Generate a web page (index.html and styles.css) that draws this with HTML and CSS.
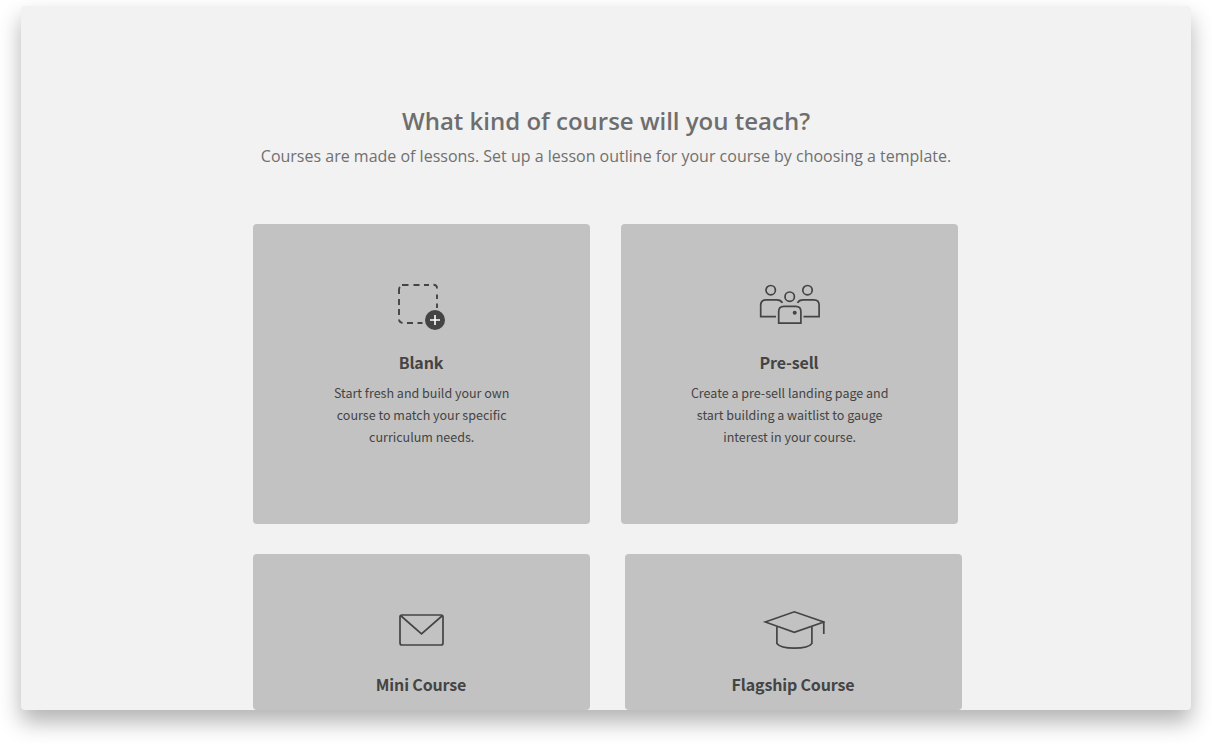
FILE: index.html
```html
<!DOCTYPE html>
<html lang="en">
<head>
<meta charset="utf-8">
<title>Choose a course template</title>
<link rel="stylesheet" href="styles.css">
</head>
<body>
<main class="panel">
  <h1 class="title"><span>What kind of course will you teach?</span></h1>
  <p class="subtitle"><span>Courses are made of lessons. Set up a lesson outline for your course by choosing a template.</span></p>
  <div class="row">
    <section class="card">
      <svg class="icon" width="62" height="50" viewBox="0 0 62 50" fill="none" stroke="#444" stroke-width="1.9">
        <path d="M11 5h6.5M22.5 5h6M33 5h5M42.5 4.8q3.5 0 3.5 3.700M46 14.500v4.500M46 23.500v4.500M8 14V9.500q0-1.500 1-2.500M8 19v6M8 29v6M8 39.500q.3 3 3.500 3.500M16 43h6M26.500 43h5"/>
        <circle cx="44" cy="40" r="10" fill="#444" stroke="none"/>
        <path d="M44 35v10M39 40h10" stroke="#fff" stroke-width="1.6"/>
      </svg>
      <h2 class="name"><span>Blank</span></h2>
      <p class="text"><span>Start fresh and build your own</span><br><span>course to match your specific</span><br><span>curriculum needs.</span></p>
    </section>
    <section class="card">
      <svg class="icon" width="62" height="50" viewBox="0 0 62 50" fill="none" stroke="#444" stroke-width="1.7">
        <circle cx="11.700" cy="10.200" r="4.700"/><circle cx="30.700" cy="16.700" r="4.700"/><circle cx="48.500" cy="10.200" r="4.700"/>
        <path d="M17 36.700H1.700V25q0-5.200 5.200-5.200h11q4 0 5.500 3M44.500 36.700h15.600V25q0-5.200-5.200-5.200H44q-4 0-5.500 3"/>
        <path d="M19.700 43.200V31.500q0-5.200 5.200-5.200h11.800q5.200 0 5.200 5.200v11.700z"/><circle cx="35.700" cy="32.800" r="2" fill="#444" stroke="none"/>
      </svg>
      <h2 class="name"><span>Pre-sell</span></h2>
      <p class="text"><span>Create a pre-sell landing page and</span><br><span>start building a waitlist to gauge</span><br><span>interest in your course.</span></p>
    </section>
  </div>
  <div class="row row-wide">
    <section class="card">
      <svg class="icon" width="62" height="50" viewBox="0 0 62 50" fill="none" stroke="#444" stroke-width="1.7">
        <rect x="9" y="5" width="43" height="30" rx="2"/><path d="M9.500 5.500l21 18.300L51.500 5.500"/>
      </svg>
      <h2 class="name"><span>Mini Course</span></h2>
    </section>
    <section class="card">
      <svg class="icon" width="62" height="50" viewBox="0 0 62 50" fill="none" stroke="#444" stroke-width="1.7">
        <path d="M2.200 12L31.300 1.800 60.800 12 31.300 22.300zM60.800 12v11.900M13.900 17v16.500q3.500 4.700 17.500 4.700t17.500-4.700V17"/>
      </svg>
      <h2 class="name"><span>Flagship Course</span></h2>
    </section>
  </div>
</main>
</body>
</html>
```

FILE: styles.css
```css
html { background: #fff; }
body { margin: 0; box-sizing: border-box; height: 746px; padding: 6px 0 0 21px; }
.panel {
  box-sizing: border-box; width: 1170px; height: 704px;
  padding-top: 96px; overflow: hidden; background: #f2f2f2; border-radius: 4px;
  box-shadow: 0 12px 22px rgba(0,0,0,.3); font-family: "Open Sans", sans-serif;
}
.title { margin: 0; font-size: 24px; line-height: 38px; font-weight: 600; color: #6e6e6e; text-align: center; }
.subtitle { margin: 3px 0 0; font-size: 16px; line-height: 26px; color: #707070; text-align: center; }
.row { display: flex; gap: 30.6px; margin: 55px 0 0 232px; }
.row-wide { gap: 34.6px; margin-top: 30px; }
.card { box-sizing: border-box; width: 337.4px; height: 300px; padding-top: 56px; background: #c2c2c2; border-radius: 4px; text-align: center; color: #444; font-family: "Noto Sans CJK SC", sans-serif; }
.row-wide .card { height: 156px; }
.icon { display: block; margin: 0 auto; }
.name { margin: 19px 0 0; padding-right: 1.4px; font-size: 16px; line-height: 26px; font-weight: 700; letter-spacing: -.16px; }
.row-wide .name { margin-top: 11px; }
.text { margin: 7px 0 0; font-size: 12.52px; line-height: 22px; }
```
